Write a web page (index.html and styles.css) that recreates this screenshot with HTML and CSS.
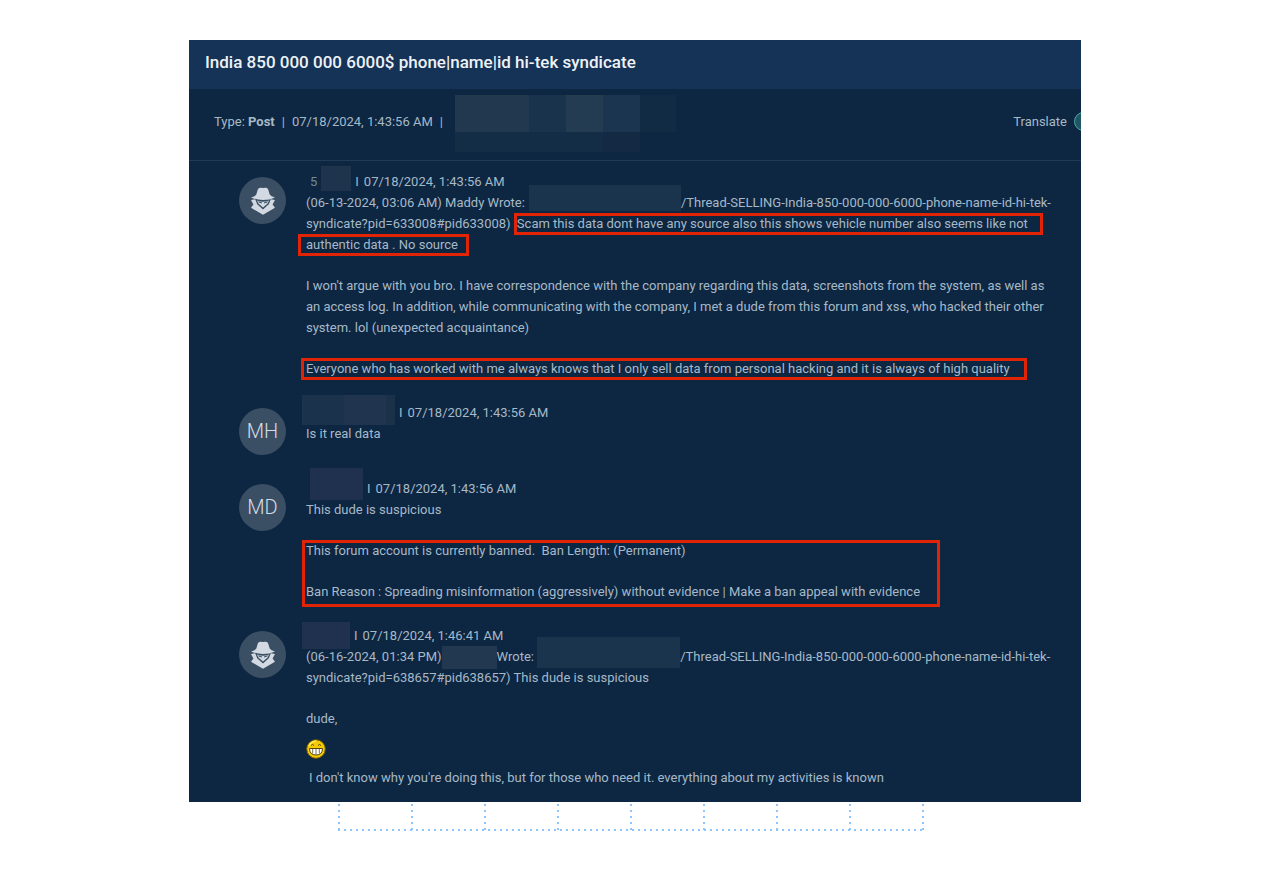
FILE: index.html
```html
<!DOCTYPE html>
<html lang="en">
<head>
<meta charset="utf-8">
<title>India 850 000 000 6000$ phone|name|id hi-tek syndicate</title>
<link rel="stylesheet" href="styles.css">
</head>
<body>
<svg class="defs" width="0" height="0" aria-hidden="true">
  <symbol id="spy" viewBox="0 0 26 28">
    <path d="M1 10.400Q5 9.600 6.300 7.600L7.800 2.600Q8.500.6 10.500.8L13 1.100L15.500.8Q17.500.6 18.200 2.600L19.700 7.600Q21 9.600 25 10.400Q20 12.900 13 12.900T1 10.400Z"/>
    <path d="M1 13L5.200 12.200L7.200 17.200L13 22.600L18.800 17.200L20.800 12.200L25 13L22.600 17.400L25 20.800L13 27.800L1 20.800L3.400 17.400Z"/>
    <path d="M7 13.400Q10 14.800 13 14.800T19 13.400L17.600 16.600L13 20.600L8.400 16.600Z"/>
    <path class="spy-cut" d="M8.400 14.900L12 16M17.600 14.900L14 16"/>
  </symbol>
</svg>
<main class="page">
  <section class="panel">
    <header class="panel-head"><h1 class="title">India 850 000 000 6000$ phone|name|id hi-tek syndicate</h1></header>
    <div class="meta">
      <p class="meta-text"><span>Type: <b>Post</b></span><span>|</span><span>07/18/2024, 1:43:56 AM</span><span>|</span></p>
      <div class="mosaic"></div>
      <label class="translate" for="translate">Translate <input class="switch" id="translate" type="checkbox"></label>
    </div>
    <div class="posts">
      <article class="post">
        <div class="avatar"><svg class="spy" aria-hidden="true"><use href="#spy"/></svg></div>
        <div class="content">
          <p class="byline"><span class="dim">5</span><span class="redact r-30"></span><span>I</span><time>07/18/2024, 1:43:56 AM</time></p>
          <p>(06-13-2024, 03:06 AM) Maddy Wrote:<span class="redact link-a"></span>/Thread-SELLING-India-850-000-000-6000-phone-name-id-hi-tek-<br>syndicate?pid=633008#pid633008) <mark class="hl tight">Scam this data dont have any source also this shows vehicle number also seems like not</mark><br><mark class="hl wide">authentic data . No source</mark></p>
          <p>I won't argue with you bro. I have correspondence with the company regarding this data, screenshots from the system, as well as<br>an access log. In addition, while communicating with the company, I met a dude from this forum and xss, who hacked their other<br>system. lol (unexpected acquaintance)</p>
          <p><mark class="hl">Everyone who has worked with me always knows that I only sell data from personal hacking and it is always of high quality</mark></p>
        </div>
      </article>
      <article class="post">
        <div class="avatar">MH</div>
        <div class="content">
          <p class="byline flush"><span class="redact tall r-93"></span><span>I</span><time>07/18/2024, 1:43:56 AM</time></p>
          <p>Is it real data</p>
        </div>
      </article>
      <article class="post">
        <div class="avatar">MD</div>
        <div class="content">
          <p class="byline"><span class="redact plum taller r-53"></span><span>I</span><time>07/18/2024, 1:43:56 AM</time></p>
          <p>This dude is suspicious</p>
          <div class="ban"><p>This forum account is currently banned.&nbsp; Ban Length: (Permanent)</p><p>Ban Reason : Spreading misinformation (aggressively) without evidence | Make a ban appeal with evidence</p></div>
        </div>
      </article>
      <article class="post">
        <div class="avatar"><svg class="spy" aria-hidden="true"><use href="#spy"/></svg></div>
        <div class="content">
          <p class="byline flush"><span class="redact plum lowered r-48"></span><span>I</span><time>07/18/2024, 1:46:41 AM</time></p>
          <p>(06-16-2024, 01:34 PM)<span class="redact name"></span>Wrote: <span class="redact link-b"></span>/Thread-SELLING-India-850-000-000-6000-phone-name-id-hi-tek-<br>syndicate?pid=638657#pid638657) This dude is suspicious</p>
          <p>dude,</p>
          <svg class="grin" viewBox="0 0 20 20" role="img" aria-label="Grinning face">
            <circle cx="10" cy="10" r="9.300" fill="#f2cb05" stroke="#6d5708" stroke-width="1"/>
            <path d="M3 7Q5 2.500 10 2" fill="none" stroke="#ffe96a" stroke-width="1.500"/>
            <path d="M5 6.500Q6.500 4.500 8 6.500M12 6.500Q13.500 4.500 15 6.500" fill="none" stroke="#5c4500"/>
            <path d="M3.500 9.500H16.500Q16.500 16 10 16T3.500 9.500Z" fill="#fff" stroke="#5c4500"/>
            <path d="M6.700 10V14.500M10 10V15.500M13.300 10V14.500" stroke="#77704f"/>
          </svg>
          <p class="last">I don't know why you're doing this, but for those who need it. everything about my activities is known</p>
        </div>
      </article>
    </div>
  </section>
  <svg class="lattice" viewBox="0 0 588 30" aria-hidden="true">
    <path d="M2 2V28M75 2V28M148 2V28M221 2V28M294 2V28M367 2V28M440 2V28M513 2V28M586 2V28M1 28H587"/>
  </svg>
</main>
</body>
</html>
```
FILE: styles.css
```css
body {
  margin: 0;
  background: #fff;
  color: #a6b9c8;
  font: 13px/21px Roboto, sans-serif;
}
p, h1 { margin: 0; }
.defs { position: absolute; }
.page { padding: 40px 189px; }
.panel {
  overflow: hidden;
  background: #0d2641;
}
.panel-head {
  padding: 10px 16px 15px;
  background: #153257;
}
.title {
  color: #eef2f6;
  font: 500 17px/24px Roboto, sans-serif;
  white-space: nowrap;
}
.meta {
  display: flex;
  align-items: flex-start;
  padding: 6px 0 8px 25px;
  border-bottom: 1px solid #213a55;
  white-space: nowrap;
}
.meta-text {
  display: flex;
  gap: 7px;
  width: 241px;
  margin-top: 16px;
}
.mosaic {
  width: 221px;
  height: 57px;
  background:
    linear-gradient(90deg, #21384f 74px, #1a334d 74px 111px, #233c52 111px 148px, #1b344f 148px 185px, #122b45 185px) 0 0 / 100% 37px no-repeat,
    linear-gradient(90deg, #142d47 148px, #132944 148px) 0 37px / 185px 20px no-repeat;
}
.translate {
  display: flex;
  align-items: center;
  gap: 7px;
  margin: 16px -29px 0 auto;
}
.switch {
  appearance: none;
  flex: none;
  width: 36px;
  height: 19px;
  margin: 0;
  border: 1px solid #4fa9a5;
  border-radius: 10px;
  background: #1f5663;
}
.posts {
  display: grid;
  gap: 23px;
  padding: 10px 16px 14px 50px;
}
.post {
  display: flex;
  align-items: flex-start;
  gap: 20px;
}
.avatar {
  display: grid;
  flex: none;
  place-items: center;
  width: 47px;
  height: 47px;
  margin-top: 6px;
  border-radius: 50%;
  background: #3a4f63;
  color: #d5dce3;
  font-size: 20px;
  font-weight: 300;
}
.spy { width: 26px; height: 28px; fill: #d3d9e2; }
.spy-cut { stroke: #3a4f63; stroke-width: 1; }
.content {
  display: grid;
  gap: 20px;
  min-width: 0;
  white-space: nowrap;
}
.byline {
  display: flex;
  align-items: center;
  gap: 4px;
  height: 21px;
  margin-bottom: -20px;
  padding-left: 4px;
}
.byline time { margin-left: 1px; }
.byline.flush { padding-left: 0; margin-left: -4px; }
.dim { color: #71879b; }
.redact {
  display: inline-block;
  flex: none;
  height: 25px;
  margin-block: -8px;
  vertical-align: middle;
  background: #1e344d;
}
.byline .redact { margin-top: -14px; }
.byline .tall { height: 30px; }
.byline .taller { height: 32px; margin-top: -18px; }
.byline .lowered { height: 27px; margin-top: -8px; }
.plum { background: #1f314e; }
.r-30 { width: 30px; }
.r-48 { width: 48px; }
.r-53 { width: 53px; }
.r-93 {
  width: 93px;
  background: linear-gradient(90deg, #1a324b 42px, #20344f 42px 84px, #1b3049 84px);
}
.name { width: 55px; height: 23px; background: #213850; }
.link-a { width: 152px; height: 26px; margin: -19px 0 -8px 4px; background: #1b344d; }
.link-b { width: 143px; height: 31px; margin-top: -18px; background: #1b344d; }
.hl {
  display: inline-block;
  margin: -2px -5px;
  padding: 0 14px 0 2px;
  border: 3px solid #e02405;
  background: none;
  color: inherit;
  line-height: 16px;
}
.hl.tight { margin-left: 0; padding: 0 12px 0 0; }
.hl.wide { margin-left: -8px; padding: 0 8px 0 5px; }
.ban {
  display: grid;
  justify-self: start;
  gap: 26px;
  margin: 0 -4px -5px;
  padding: 0 17px 5px 1px;
  border: 3px solid #e02405;
  line-height: 15px;
}
.grin { width: 20px; height: 20px; margin-top: -10px; }
.last { margin: -12px 0 0 3px; }
.lattice {
  display: block;
  width: 588px;
  height: 30px;
  margin-left: 148px;
  fill: none;
  stroke: #8ec5fb;
  stroke-width: 2;
  stroke-dasharray: 2 4;
}
```
